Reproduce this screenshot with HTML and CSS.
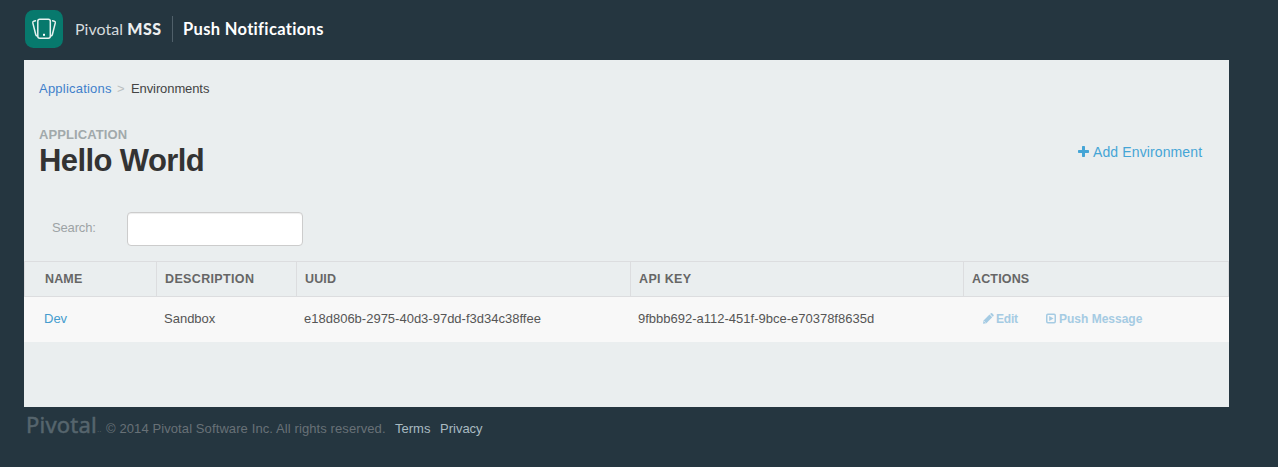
FILE: index.html
```html
<!DOCTYPE html>
<html lang="en">
<head>
<meta charset="utf-8">
<title>Push Notifications</title>
<link rel="stylesheet" href="styles.css">
</head>
<body>
<header class="topbar">
  <svg class="logo" width="38" height="38" viewBox="0 0 38 38" fill="none" stroke="#e6f2ef" stroke-width="1.5" stroke-linejoin="round" stroke-linecap="round">
    <rect width="38" height="38" rx="8.5" fill="#07796d" stroke="none"/>
    <rect x="12.8" y="9.2" width="12.500" height="19" rx="2"/>
    <path d="M10.500 10.800 8.800 11.200q-1.300.4-1 1.700l3 11.800q.3 1.200 1.500 1.300M27.600 10.800l1.700.4q1.300.4 1 1.700l-3 11.800q-.3 1.200-1.500 1.300"/>
    <rect x="18" y="23.800" width="2" height="2" fill="#fff" stroke="none"/>
  </svg>
  <span class="brand">Pivotal <b>MSS</b></span>
  <span class="product">Push Notifications</span>
</header>
<main class="panel">
  <nav class="crumbs"><a class="crumb-link">Applications</a><span class="crumb-sep">&gt;</span><span class="crumb-here">Environments</span></nav>
  <section class="heading">
    <div>
      <div class="eyebrow">APPLICATION</div>
      <h1 class="title">Hello World</h1>
    </div>
    <a class="add"><svg class="plus" width="11" height="11" viewBox="0 0 11 11"><path d="M4 .7q0-.7.7-.7h1.600q.7 0 .7.700V4h3.300q.7 0 .7.700v1.600q0 .7-.7.700H7v3.300q0 .7-.7.700H4.700q-.7 0-.7-.7V7H.700Q0 7 0 6.300V4.700Q0 4 .700 4H4z" fill="#45a5d6"/></svg><span>Add Environment</span></a>
  </section>
  <div class="search"><label class="search-label" for="q">Search:</label><input class="search-input" id="q" type="text"></div>
  <div class="grid head">
    <div class="cell">NAME</div><div class="cell wide">DESCRIPTION</div><div class="cell">UUID</div><div class="cell wide">API KEY</div><div class="cell">ACTIONS</div>
  </div>
  <div class="grid row">
    <div class="cell"><a class="name">Dev</a></div><div class="cell">Sandbox</div><div class="cell">e18d806b-2975-40d3-97dd-f3d34c38ffee</div><div class="cell">9fbbb692-a112-451f-9bce-e70378f8635d</div>
    <div class="cell actions">
      <a class="action edit"><svg width="11" height="11" viewBox="0 0 11 11" fill="#a5cbe3"><path d="M0 10.800.600 7.400 6.500 1.600 9.200 4.300 3.400 10.200z"/><path d="M7.100 1 7.900.300q.6-.5 1.200 0L10.500 1.700q.5.600 0 1.200l-.8.800z"/><path d="M1.300 8.300 2.500 9.500" stroke="#f8f8f8" stroke-width=".8"/></svg><span>Edit</span></a>
      <a class="action push"><svg width="10" height="11" viewBox="0 0 10 11"><rect x=".75" y="1.250" width="8.500" height="8.500" rx="1.200" fill="none" stroke="#a5cbe3" stroke-width="1.500"/><path d="M3.200 2.900v5.200L7.600 5.500z" fill="#a5cbe3"/></svg><span>Push Message</span></a>
    </div>
  </div>
</main>
<footer class="footer">
  <span class="foot-logo">Pivotal</span><span class="foot-tm">..</span>
  <span class="copy">© 2014 Pivotal Software Inc. All rights reserved.</span>
  <a class="foot-link terms">Terms</a><a class="foot-link privacy">Privacy</a>
</footer>
</body>
</html>
```
FILE: styles.css
```css
* { box-sizing: border-box; }
body {
  margin: 0;
  height: 467px;
  background: #253640;
  font-family: "Liberation Sans", Arial, sans-serif;
  font-size: 13px;
  line-height: 18px;
  overflow: hidden;
}
.topbar { height: 60px; padding: 10px 0 0 25px; display: flex; }
.logo { flex: none; }
.brand, .product { white-space: nowrap; font-family: Lato, "Open Sans", sans-serif; line-height: 26px; }
.brand { height: 26px; margin: 6px 0 0 12px; width: 98px; border-right: 1px solid #50606a; font-size: 16px; font-weight: 400; color: #d5dadd; letter-spacing: .05px; line-height: 25px; }
.brand b { font-weight: 900; color: #eceff0; letter-spacing: .5px; }
.product { margin: 6px 0 0 10px; font-size: 16.5px; font-weight: 700; color: #fff; letter-spacing: .33px; }
.panel { width: 1205px; height: 347px; margin-left: 24px; background: #eaeeef; }
.crumbs { display: flex; height: 67px; padding: 20px 0 0 15px; white-space: nowrap; }
.crumb-link { color: #3f80cb; width: 78px; letter-spacing: .22px; }
.crumb-sep { color: #bbbfc0; width: 14px; }
.crumb-here { color: #444; letter-spacing: -.1px; }
.heading { display: flex; justify-content: space-between; height: 85px; padding: 0 27px 0 15px; }
.eyebrow { color: #a1a9ab; font-weight: 700; font-size: 13px; line-height: 16px; letter-spacing: .1px; }
.title { margin: 0; color: #333; font-size: 31px; line-height: 36px; font-weight: 700; letter-spacing: -.6px; }
.add { display: flex; height: 18px; margin-top: 16px; color: #45a5d6; font-size: 14px; width: 124px; white-space: nowrap; letter-spacing: .12px; }
.plus { margin: 3px 4px 0 0; flex: none; }
.search { display: flex; height: 49px; padding-left: 28px; }
.search-label { width: 75px; padding-top: 7px; color: #9da3a5; letter-spacing: -.15px; }
.search-input { width: 176px; height: 34px; border: 1px solid #ccc; border-radius: 4px; background: #fff; box-shadow: inset 0 1px 1px rgba(0,0,0,.075); outline: none; padding: 6px 12px; }
.grid { display: grid; grid-template-columns: 132px 140px 334px 333px 266px; white-space: nowrap; }
.head { height: 36px; border: solid #dcdddf; border-width: 1px 0; color: #666; font-weight: 700; font-size: 12.5px; letter-spacing: .15px; }
.head .cell { border-left: 1px solid #dcdddf; padding: 8px 0 0 8px; }
.head .wide { letter-spacing: .35px; }
.head .cell:first-child { padding-left: 20px; }
.head .cell:last-child { border-right: 1px solid #dcdddf; }
.row { height: 45px; background: #f8f8f8; color: #555; }
.row .cell { padding: 13px 0 0 8px; }
.row .cell:first-child { padding-left: 20px; }
.name { color: #459cce; }
.row .actions { display: flex; padding-left: 20px; color: #a5cbe3; font-weight: 700; font-size: 12px; }
.action { display: flex; }
.action svg { margin: 3px 3px 0 0; flex: none; }
.edit { width: 63px; letter-spacing: -.2px; }
.edit svg { margin-right: 2px; }
.footer { display: flex; padding: 7px 0 0 26px; white-space: nowrap; }
.foot-logo { width: 71px; color: #56656d; font-family: "Noto Sans", sans-serif; font-size: 22px; line-height: 20px; -webkit-text-stroke: .5px #56656d; letter-spacing: .2px; }
.foot-tm { width: 9px; color: #56656d; font-size: 8px; line-height: 32px; height: 24px; }
.copy { width: 289px; padding-top: 6px; color: #687177; letter-spacing: .1px; }
.foot-link { padding-top: 6px; color: #a9bbc2; }
.terms { width: 45px; }
```
